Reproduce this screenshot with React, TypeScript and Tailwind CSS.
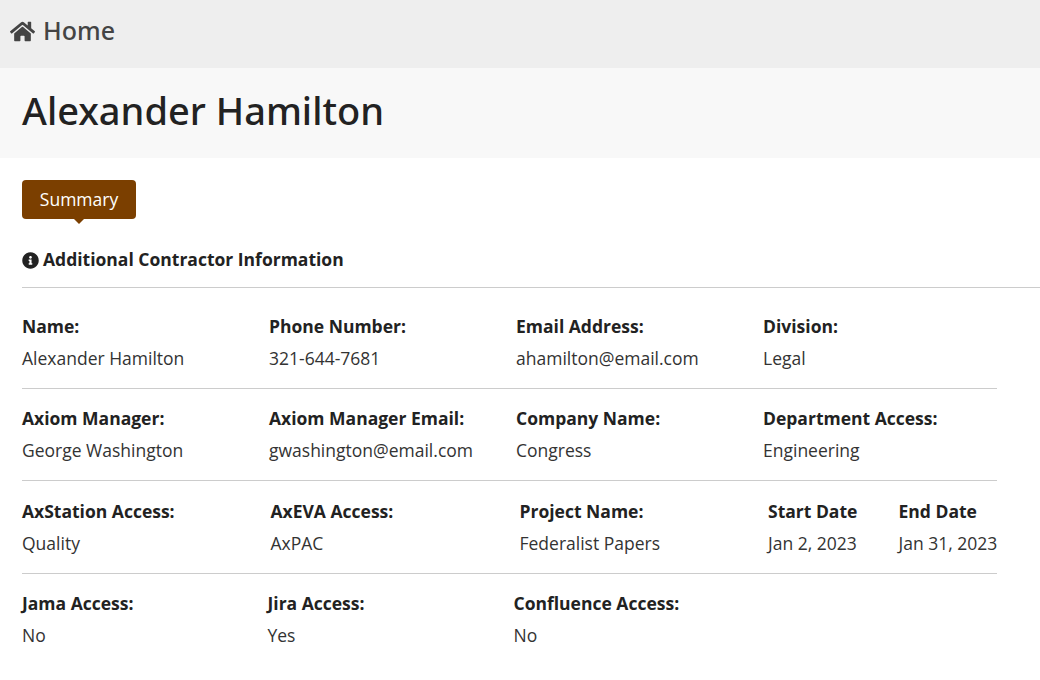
import { FaHome, FaInfoCircle } from 'react-icons/fa';

type FieldProps = {
  label: string;
  value: string;
};

const personal: FieldProps[] = [
  { label: 'Name:', value: 'Alexander Hamilton' },
  { label: 'Phone Number:', value: '321-644-7681' },
  { label: 'Email Address:', value: 'ahamilton@email.com' },
  { label: 'Division:', value: 'Legal' },
];

const company: FieldProps[] = [
  { label: 'Axiom Manager:', value: 'George Washington' },
  { label: 'Axiom Manager Email:', value: 'gwashington@email.com' },
  { label: 'Company Name:', value: 'Congress' },
  { label: 'Department Access:', value: 'Engineering' },
];

const project: FieldProps[] = [
  { label: 'AxStation Access:', value: 'Quality' },
  { label: 'AxEVA Access:', value: 'AxPAC' },
  { label: 'Project Name:', value: 'Federalist Papers' },
  { label: 'Start Date', value: 'Jan 2, 2023' },
  { label: 'End Date', value: 'Jan 31, 2023' },
];

const tools: FieldProps[] = [
  { label: 'Jama Access:', value: 'No' },
  { label: 'Jira Access:', value: 'Yes' },
  { label: 'Confluence Access:', value: 'No' },
];

function Field({ label, value }: FieldProps) {
  return (
    <div className="whitespace-nowrap text-[17.5px] leading-8">
      <div className="font-bold">{label}</div>
      <div className="text-[#333]">{value}</div>
    </div>
  );
}

function Row({ fields, className }: { fields: FieldProps[]; className: string }) {
  return (
    <div className={`grid ${className}`}>
      {fields.map((field) => (
        <Field key={field.label} label={field.label} value={field.value} />
      ))}
    </div>
  );
}

export default function App() {
  return (
    <div className="h-[680px] overflow-hidden bg-white font-['Open_Sans',sans-serif] text-[#222]">
      {/* Top bar */}
      <header className="flex h-[68px] items-start gap-2 bg-[#eee] pl-2.5 pt-[11px] text-[#444]">
        <FaHome className="mt-2 size-[25px]" />
        <span className="font-['Noto_Sans','Open_Sans',sans-serif] text-[25px] leading-[38px] font-medium">Home</span>
      </header>

      {/* Page title */}
      <div className="flex h-[90px] items-center bg-[#f8f8f8] pb-[7px] pl-[22px]">
        <h1 className="font-['Noto_Sans','Open_Sans',sans-serif] text-[38px] leading-[54px] font-medium">
          Alexander Hamilton
        </h1>
      </div>

      <main className="pl-[22px] pt-[22px]">
        {/* Tabs */}
        <div className="flex">
          <div className="relative flex h-[39px] w-[114px] items-center justify-center rounded bg-[#7b3f00] text-[17.5px] leading-[39px] text-white">
            Summary
            <span className="absolute top-full left-1/2 -translate-x-1/2 border-x-[5px] border-t-[5px] border-x-transparent border-t-[#7b3f00]" />
          </div>
        </div>

        {/* Section heading */}
        <div className="flex h-[69px] items-center gap-1 border-b border-[#ccc] pt-3">
          <FaInfoCircle className="mt-0.5 size-[17px]" />
          <h2 className="text-[17.5px] leading-7 font-bold">Additional Contractor Information</h2>
        </div>

        {/* Contractor details */}
        <div className="w-[975px]">
          <Row fields={personal} className="h-[101px] grid-cols-[247px_247px_247px_1fr] border-b border-[#ccc] pt-[22px]" />
          <Row fields={company} className="h-[92px] grid-cols-[247px_247px_247px_1fr] border-b border-[#ccc] pt-[13px]" />
          <Row fields={project} className="h-[93px] grid-cols-[248.5px_249px_248.5px_130.5px_1fr] border-b border-[#ccc] pt-[14px]" />
          <Row fields={tools} className="h-[92px] grid-cols-[245.5px_246px_1fr] pt-[13px]" />
        </div>
      </main>
    </div>
  );
}
